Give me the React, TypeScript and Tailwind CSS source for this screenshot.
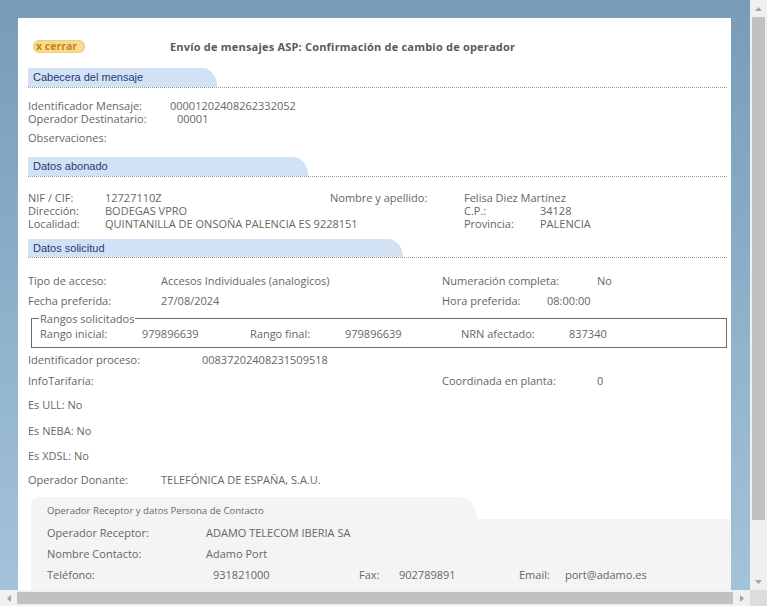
import React from 'react'

function SectionTab({ title, width, height }: { title: string; width: string; height: string }) {
  return (
    <div className="border-b border-dotted border-[#9a9a9a]">
      <div className={`${width} ${height} bg-[#d3e1f4] rounded-tr-[15px_18px] flex items-center pl-[5px] font-['Liberation_Sans',Arial,sans-serif] text-[11px] text-[#1f3b78]`}>
        {title}
      </div>
    </div>
  )
}

function Arrow({ dir }: { dir: 'up' | 'down' | 'left' | 'right' }) {
  const pts = {
    up: '0,4 3.5,0 7,4',
    down: '0,0 3.5,4 7,0',
    left: '4,0 0,3.5 4,7',
    right: '0,0 4,3.5 0,7',
  }[dir]
  const vertical = dir === 'up' || dir === 'down'
  return (
    <svg width={vertical ? 7 : 4} height={vertical ? 4 : 7}>
      <polygon points={pts} fill="#a3a3a3" />
    </svg>
  )
}

export default function App() {
  return (
    <div className="w-[767px] h-[606px] flex flex-col overflow-hidden font-['Open_Sans',Arial,sans-serif] text-[11px] leading-[13px] text-[#666]">
      <div className="flex h-[590px]">
        <div className="w-[750px] h-[590px] overflow-hidden bg-gradient-to-b from-[#789cb8] to-[#a3c3da] pl-[18px] pt-[18px] pr-[19px]">
          <div className="bg-white pl-[10px] pr-[4px] pt-[20px] pb-[40px]">
            {/* header */}
            <div className="flex items-center h-[16px]">
              <div className="w-[142px] pl-[5px]">
                <div className="w-[52px] h-[13px] rounded-[6px] bg-[#f8dc8e] border border-[#eccd84] flex items-center pl-[2px] text-[10.5px] leading-[11px] font-bold text-[#c9801c]">
                  x cerrar
                </div>
              </div>
              <div className="font-bold tracking-[0.2px] text-[#5a5a5a]">Envío de mensajes ASP: Confirmación de cambio de operador</div>
            </div>

            {/* Cabecera del mensaje */}
            <div className="mt-[14px]">
              <SectionTab title="Cabecera del mensaje" width="w-[189px]" height="h-[19px]" />
            </div>
            <div className="mt-[11px] flex">
              <div className="w-[142px]">Identificador Mensaje:</div>
              <div>00001202408262332052</div>
            </div>
            <div className="flex">
              <div className="w-[149px]">Operador Destinatario:</div>
              <div>00001</div>
            </div>
            <div className="mt-[6px]">Observaciones:</div>

            {/* Datos abonado */}
            <div className="mt-[13px]">
              <SectionTab title="Datos abonado" width="w-[280px]" height="h-[19px]" />
            </div>
            <div className="mt-[14px] flex">
              <div className="w-[77px]">NIF / CIF:</div>
              <div className="w-[225px]">12727110Z</div>
              <div className="w-[134px]">Nombre y apellido:</div>
              <div>Felisa Diez Martínez</div>
            </div>
            <div className="flex">
              <div className="w-[77px]">Dirección:</div>
              <div className="w-[359px]">BODEGAS VPRO</div>
              <div className="w-[76px]">C.P.:</div>
              <div>34128</div>
            </div>
            <div className="flex">
              <div className="w-[77px]">Localidad:</div>
              <div className="w-[359px]">QUINTANILLA DE ONSOÑA PALENCIA ES 9228151</div>
              <div className="w-[76px]">Provincia:</div>
              <div>PALENCIA</div>
            </div>

            {/* Datos solicitud */}
            <div className="mt-[9px]">
              <SectionTab title="Datos solicitud" width="w-[375px]" height="h-[18px]" />
            </div>
            <div className="mt-[12px] flex items-center h-[20px]">
              <div className="w-[133px]">Tipo de acceso:</div>
              <div className="w-[281px]">Accesos Individuales (analogicos)</div>
              <div className="w-[155px]">Numeración completa:</div>
              <div>No</div>
            </div>
            <div className="flex items-center h-[20px]">
              <div className="w-[133px]">Fecha preferida:</div>
              <div className="w-[281px]">27/08/2024</div>
              <div className="w-[105px]">Hora preferida:</div>
              <div>08:00:00</div>
            </div>
            <fieldset className="mt-[2px] ml-[3px] border border-[#6a6a6a] pl-[8px] pr-[8px] pb-[7px] pt-[2px]">
              <legend className="px-[1px] -ml-[1px] text-[#666]">Rangos solicitados</legend>
              <div className="flex">
                <div className="w-[102px]">Rango inicial:</div>
                <div className="w-[108px]">979896639</div>
                <div className="w-[95px]">Rango final:</div>
                <div className="w-[116px]">979896639</div>
                <div className="w-[108px]">NRN afectado:</div>
                <div>837340</div>
              </div>
            </fieldset>
            <div className="flex items-center h-[22px] pt-[1px]">
              <div className="w-[174px]">Identificador proceso:</div>
              <div>00837202408231509518</div>
            </div>
            <div className="flex items-center h-[20px]">
              <div className="w-[414px]">InfoTarifaria:</div>
              <div className="w-[155px]">Coordinada en planta:</div>
              <div>0</div>
            </div>
            <div className="flex items-center h-[28px]">Es ULL: No</div>
            <div className="flex items-center h-[24px]">Es NEBA: No</div>
            <div className="flex items-center h-[26px]">Es XDSL: No</div>
            <div className="flex items-center h-[22px]">
              <div className="w-[133px]">Operador Donante:</div>
              <div>TELEFÓNICA DE ESPAÑA, S.A.U.</div>
            </div>

            {/* Operador receptor */}
            <div className="mt-[7px] ml-[3px] -mr-[4px]">
              <div className="w-[446px] h-[22px] bg-[#f4f4f4] rounded-tl-[8px] rounded-tr-[16px_22px] flex items-center pl-[16px] pt-[4px] text-[9.6px] text-[#6a6a6a]">
                Operador Receptor y datos Persona de Contacto
              </div>
              <div className="bg-[#f4f4f4] pl-[16px] pt-[3px] pb-[20px]">
                <div className="flex items-center h-[21px]">
                  <div className="w-[159px]">Operador Receptor:</div>
                  <div>ADAMO TELECOM IBERIA SA</div>
                </div>
                <div className="flex items-center h-[21px]">
                  <div className="w-[159px]">Nombre Contacto:</div>
                  <div>Adamo Port</div>
                </div>
                <div className="flex items-center h-[21px]">
                  <div className="w-[166px]">Teléfono:</div>
                  <div className="w-[146px]">931821000</div>
                  <div className="w-[40px]">Fax:</div>
                  <div className="w-[120px]">902789891</div>
                  <div className="w-[46px]">Email:</div>
                  <div>port@adamo.es</div>
                </div>
              </div>
            </div>
          </div>
        </div>

        {/* vertical scrollbar */}
        <div className="w-[17px] h-[590px] bg-[#f0f0f0] flex flex-col items-center">
          <div className="h-[17px] flex items-center justify-center">
            <Arrow dir="up" />
          </div>
          <div className="w-[13px] h-[503px] bg-[#c1c1c1]" />
          <div className="flex-1" />
          <div className="h-[17px] flex items-center justify-center">
            <Arrow dir="down" />
          </div>
        </div>
      </div>

      {/* horizontal scrollbar */}
      <div className="flex h-[16px]">
        <div className="w-[750px] bg-[#f0f0f0] flex items-center">
          <div className="w-[17px] flex justify-center">
            <Arrow dir="left" />
          </div>
          <div className="w-[716px] h-[12px] bg-[#c1c1c1]" />
          <div className="flex-1 flex justify-center">
            <Arrow dir="right" />
          </div>
        </div>
        <div className="w-[17px] bg-[#dcdcdc]" />
      </div>
    </div>
  )
}
